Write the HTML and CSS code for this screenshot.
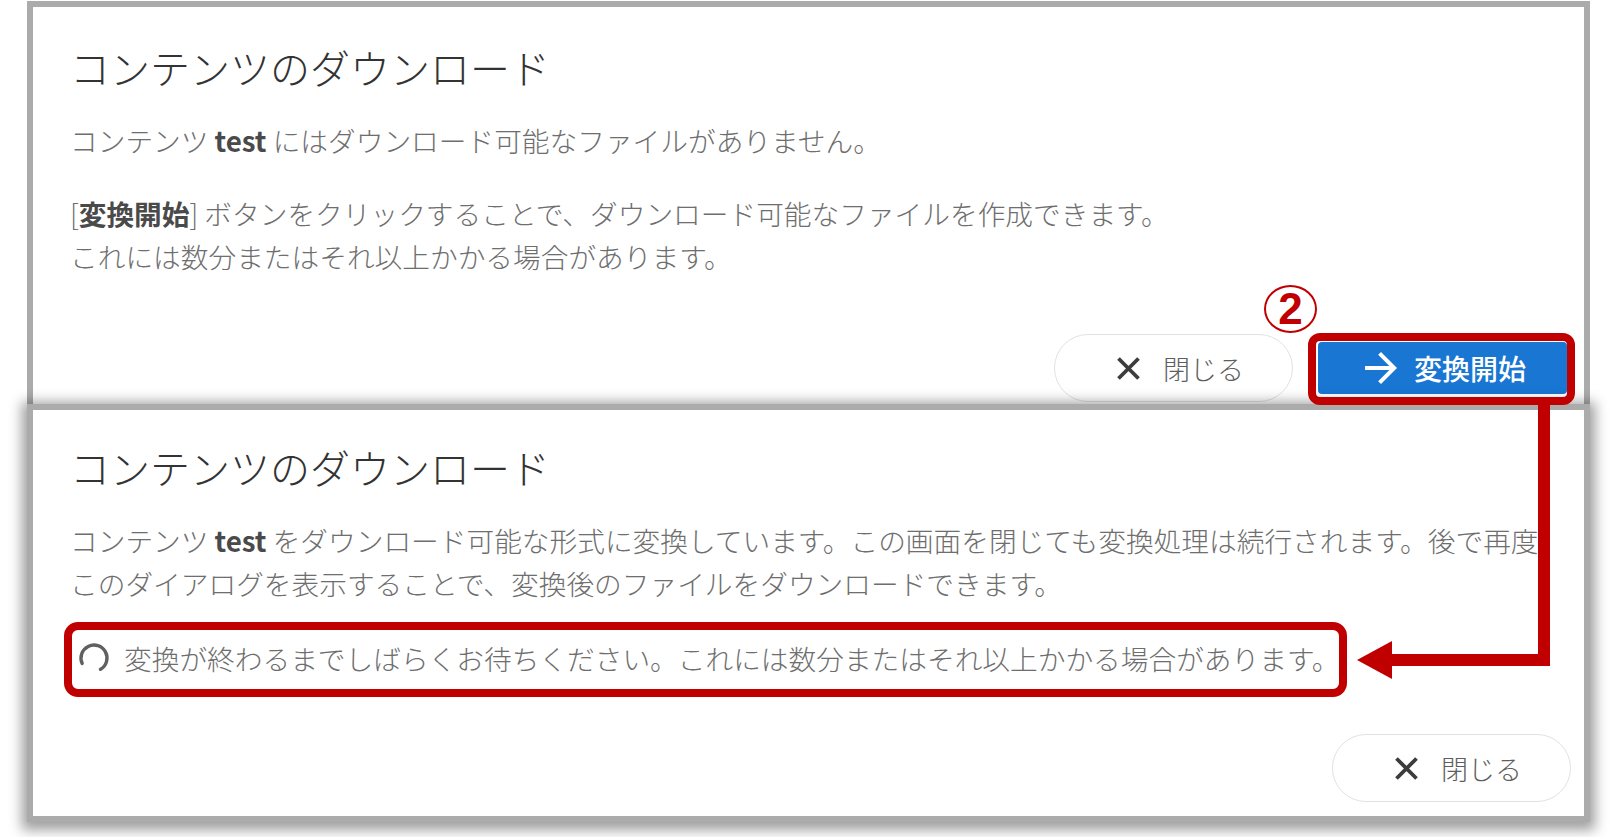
FILE: index.html
```html
<!DOCTYPE html>
<html lang="ja">
<head>
<meta charset="utf-8">
<title>コンテンツのダウンロード</title>
<link rel="stylesheet" href="styles.css">
</head>
<body>
<div class="stage">
  <section class="panel panel-top">
    <h1 class="title">コンテンツのダウンロード</h1>
    <p class="text">コンテンツ <b>test</b> にはダウンロード可能なファイルがありません。</p>
    <p class="text text-gap">[<b>変換開始</b>] ボタンをクリックすることで、ダウンロード可能なファイルを作成できます。<br>これには数分またはそれ以上かかる場合があります。</p>
    <div class="actions">
      <button class="btn btn-outline">
        <svg class="ico-close" viewBox="0 0 25 25" width="25" height="25"><path d="M2.5 2.5L22.5 22.5M22.5 2.5L2.5 22.5" stroke="#3c3c3c" stroke-width="3.8" fill="none"/></svg>
        <span>閉じる</span>
      </button>
      <button class="btn btn-primary">
        <svg class="ico-arrow" viewBox="4 4 16 16" width="32" height="32"><path d="M12 4l-1.41 1.41L16.17 11H4v2h12.17l-5.58 5.59L12 20l8-8z" fill="#fff"/></svg>
        <span>変換開始</span>
      </button>
    </div>
  </section>

  <section class="panel panel-bottom">
    <h1 class="title">コンテンツのダウンロード</h1>
    <p class="text">コンテンツ <b>test</b> をダウンロード可能な形式に変換しています。この画面を閉じても変換処理は続行されます。後で再度<br>このダイアログを表示することで、変換後のファイルをダウンロードできます。</p>
    <div class="status">
      <svg class="spinner" viewBox="0 0 34 34" width="34" height="34"><path d="M5.2 22.5A13 13 0 1 1 23.5 28.3" stroke="#606060" stroke-width="3.4" fill="none" stroke-linecap="round"/></svg>
      <span>変換が終わるまでしばらくお待ちください。これには数分またはそれ以上かかる場合があります。</span>
    </div>
    <div class="actions">
      <button class="btn btn-outline">
        <svg class="ico-close" viewBox="0 0 25 25" width="25" height="25"><path d="M2.5 2.5L22.5 22.5M22.5 2.5L2.5 22.5" stroke="#3c3c3c" stroke-width="3.8" fill="none"/></svg>
        <span>閉じる</span>
      </button>
    </div>
  </section>

  <div class="step-badge">2</div>
  <div class="mark mark-start"></div>
  <div class="mark mark-status"></div>
  <svg class="flow-arrow" viewBox="0 0 210 290" width="210" height="290">
    <path d="M194 0V260H40" stroke="#c00000" stroke-width="12" fill="none" stroke-linejoin="miter"/>
    <path d="M7 260L42 241V279Z" fill="#c00000"/>
  </svg>
</div>
</body>
</html>
```

FILE: styles.css
```css
* { box-sizing: border-box; }

html, body {
  margin: 0;
  padding: 0;
  background: #fff;
}

body {
  font-family: "Noto Sans CJK JP", "Noto Sans", sans-serif;
}

.stage {
  position: relative;
  width: 1616px;
  height: 837px;
  padding: 1px 0 0 27px;
  overflow: hidden;
}

.panel {
  display: flex;
  flex-direction: column;
  width: 1563px;
  background: #fff;
  border: 6px solid #ababab;
}

.panel-top {
  height: 403px;
  border-bottom: 0;
  padding: 36px 17px 2px 37px;
}

.panel-bottom {
  position: relative;
  z-index: 1;
  height: 418px;
  padding: 33px 13px 14px 37px;
  box-shadow: 0 3px 12px 5px rgba(0, 0, 0, 0.38);
}

.title {
  margin: 0;
  font-size: 40px;
  line-height: 48px;
  font-weight: 300;
  color: #333;
  white-space: nowrap;
}

.text {
  margin: 28px 0 0;
  font-size: 27.7px;
  line-height: 43px;
  font-weight: 300;
  color: #6e6e6e;
  white-space: nowrap;
}

.text-gap { margin-top: 30px; }

.text b {
  font-weight: 700;
  color: #4a4a4a;
}

.status {
  display: flex;
  align-items: center;
  gap: 13px;
  height: 43px;
  margin-top: 31px;
  padding-left: 7px;
  font-size: 27.7px;
  font-weight: 300;
  color: #6e6e6e;
  white-space: nowrap;
}

.spinner { flex: none; }

.actions {
  margin-top: auto;
  display: flex;
  justify-content: flex-end;
  align-items: center;
  gap: 25px;
}

.btn {
  display: flex;
  align-items: center;
  font-family: inherit;
  cursor: pointer;
  white-space: nowrap;
}

.btn-outline {
  width: 239px;
  height: 68px;
  padding: 0 0 0 61px;
  gap: 22px;
  border: 1.5px solid #e2e2e2;
  border-radius: 34px;
  background: #fff;
  font-size: 27px;
  font-weight: 300;
  color: #5e5e5e;
}

.btn-primary {
  width: 249px;
  height: 52px;
  padding: 0 0 0 47px;
  gap: 17px;
  border: 0;
  border-radius: 4px;
  background: #1976d2;
  font-size: 28px;
  font-weight: 500;
  color: #fff;
}

.step-badge {
  position: absolute;
  left: 1264px;
  top: 285px;
  width: 53px;
  height: 48px;
  border: 2px solid #c00000;
  border-radius: 50%;
  display: flex;
  align-items: center;
  justify-content: center;
  font-size: 44px;
  line-height: 1;
  font-weight: 700;
  color: #c00000;
  font-family: "Liberation Sans", "Noto Sans", sans-serif;
}

.mark {
  position: absolute;
  z-index: 2;
  border: 8px solid #c00000;
  border-radius: 12px;
}

.mark-start {
  left: 1308px;
  top: 333px;
  width: 267px;
  height: 72px;
}

.mark-status {
  left: 64px;
  top: 622px;
  width: 1283px;
  height: 75px;
  border-radius: 14px;
}

.flow-arrow {
  position: absolute;
  z-index: 2;
  left: 1350px;
  top: 400px;
}
```
